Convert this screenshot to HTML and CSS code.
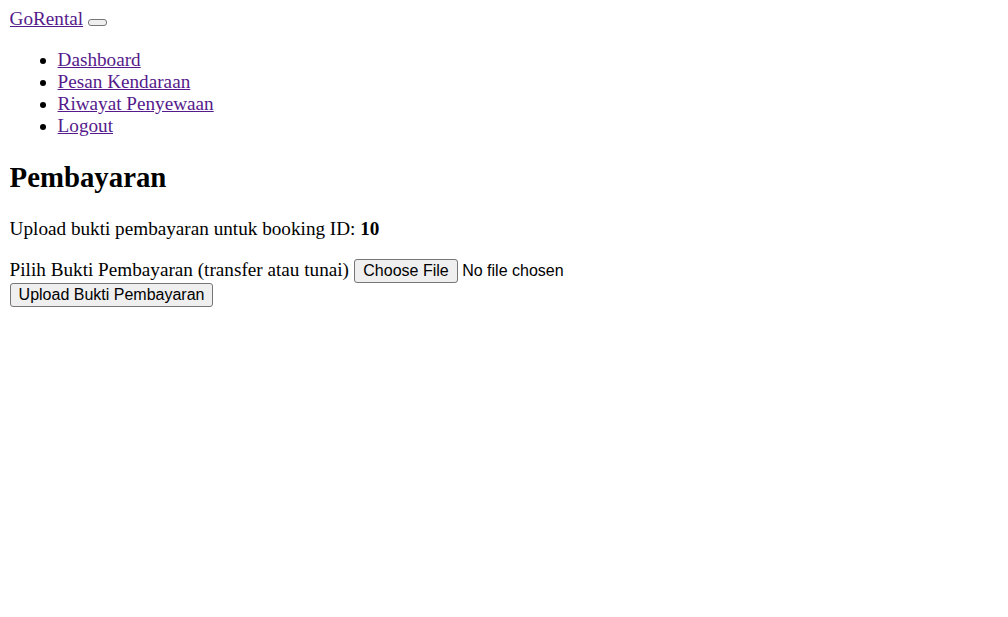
FILE: index.html
```html
<!DOCTYPE html>
<html lang="id">
<head>
<meta charset="utf-8">
<title>Pembayaran - GoRental</title>
<link rel="stylesheet" href="styles.css">
</head>
<body class="page">
<nav class="navbar">
  <div class="brand-row">
    <a class="link brand" href="#">GoRental</a>
    <button class="btn toggler" type="button"></button>
  </div>
  <ul class="menu">
    <li><a class="link" href="#">Dashboard</a></li>
    <li><a class="link" href="#">Pesan Kendaraan</a></li>
    <li><a class="link" href="#">Riwayat Penyewaan</a></li>
    <li><a class="link" href="#">Logout</a></li>
  </ul>
</nav>
<main class="content">
  <h2 class="title">Pembayaran</h2>
  <p class="lead">Upload bukti pembayaran untuk booking ID: <strong>10</strong></p>
  <form class="upload-form">
    <label class="label" for="bukti">Pilih Bukti Pembayaran (transfer atau tunai)</label>
    <input class="file" type="file" id="bukti"><br>
    <button class="btn submit" type="submit">Upload Bukti Pembayaran</button>
  </form>
</main>
</body>
</html>
```
FILE: styles.css
```css
html { background: #fff; }
.page {
  margin: 7.6px 9.6px 9.6px;
  font-family: "Liberation Serif", "Times New Roman", serif;
  font-size: 19.2px;
  color: #000;
}
.link { color: #551a8b; text-decoration: underline; }
.brand-row { display: block; }
.btn {
  font-family: "Liberation Sans", Arial, sans-serif;
  font-size: 16px;
  color: #000;
  background: #efefef;
  border: 1px solid #767676;
  border-radius: 3px;
  margin: 0;
}
.toggler {
  width: 19px;
  height: 7px;
  padding: 0;
  vertical-align: baseline;
  margin-left: 0;
}
.menu {
  margin: 19.2px 0;
  padding-left: 48px;
  list-style: disc;
}
.title {
  font-size: 28.8px;
  font-weight: bold;
  margin: 23.9px 0;
}
.lead { margin: 19.2px 0; }
.upload-form { margin: 0; }
.file {
  font-family: "Liberation Sans", Arial, sans-serif;
  font-size: 16px;
  color: #000;
}
.file::file-selector-button {
  font-family: "Liberation Sans", Arial, sans-serif;
  font-size: 16px;
  color: #000;
  background: #efefef;
  border: 1px solid #767676;
  border-radius: 3px;
  padding: 2px 8.5px;
  margin-right: 4px;
}
.submit { padding: 2px 8px; }
```
